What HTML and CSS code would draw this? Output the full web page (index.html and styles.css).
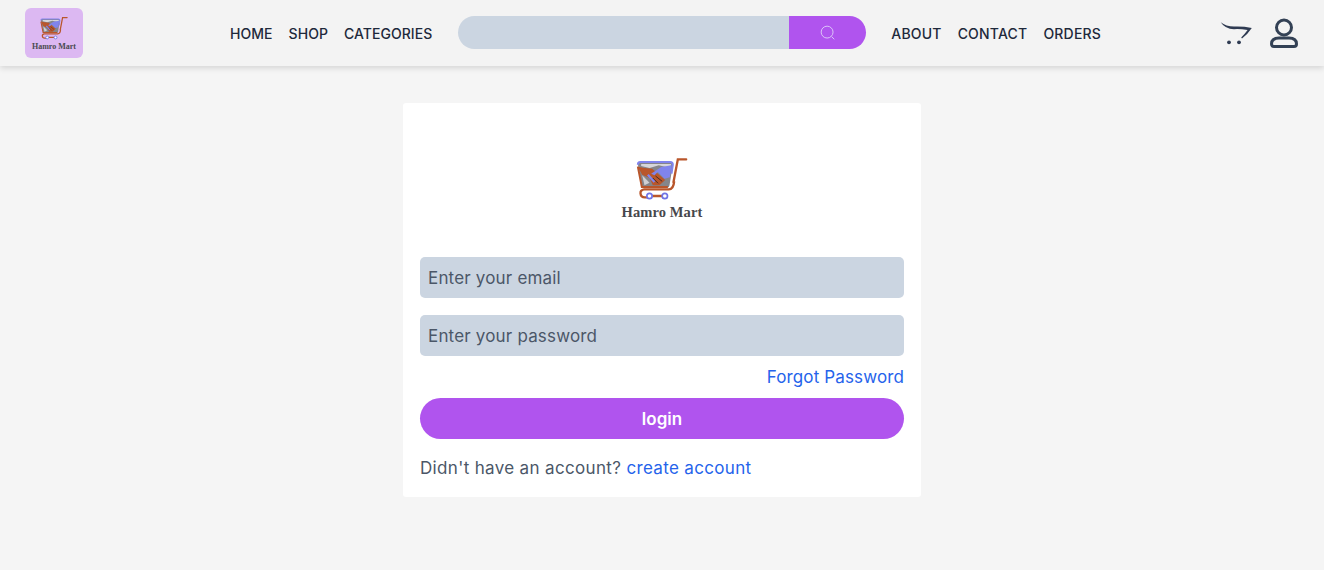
FILE: index.html
```html
<!DOCTYPE html>
<html lang="en">
<head>
    <meta charset="UTF-8">
    <meta name="viewport" content="width=device-width, initial-scale=1.0">
    <link rel="stylesheet" href="styles.css">
    <title>Hamro Mart</title>
</head>
<body>

    <!-- Dibujo del carrito, se usa en los dos logos -->
    <svg class="defs" width="0" height="0">
        <symbol id="cartLogo" viewBox="110 55 155 135">
            <path d="M115 76 Q115 70 122 70 H212 Q220 70 220 78 L210 140 Q209 148 202 148 H136 Q129 148 127 140 Z" fill="#85858a"/>
            <path d="M125 76 H215 L212 88 L178 80 L150 88 L125 82 Z" fill="#d6d6da"/>
            <path d="M128 110 L150 132 L135 140 Z" fill="#d0d0d4"/>
            <path d="M115 84 L135 88 L158 90 L197 124 L180 140 L160 140 L150 118 L128 108 Z" fill="#b9562b"/>
            <path d="M115 84 L127 145 H205" fill="none" stroke="#b9562b" stroke-width="6"/>
            <path d="M155 105 L185 85 L216 80 L211 116 L195 120 L175 100 L165 110 Z" fill="#8084ec"/>
            <path d="M145 108 L165 130" stroke="#8084ec" stroke-width="7"/>
            <path d="M168 112 L188 128 M160 118 L176 134" stroke="#4a2c24" stroke-width="3"/>
            <path d="M115 78 Q115 70 122 70 H212 Q220 70 220 78 L216 105" fill="none" stroke="#8084ec" stroke-width="6"/>
            <path d="M222 130 L235 62 H260" fill="none" stroke="#b9562b" stroke-width="7" stroke-linecap="round"/>
            <path d="M224 128 Q222 152 208 152 H134 Q122 154 123 164 Q124 176 136 176 H150 M158 172 H188" fill="none" stroke="#b9562b" stroke-width="7"/>
            <circle cx="150" cy="172" r="8" fill="#fff" stroke="#7074e6" stroke-width="5"/>
            <circle cx="196" cy="172" r="8" fill="#fff" stroke="#7074e6" stroke-width="5"/>
        </symbol>
    </svg>

    <!-- Barra de navegacion -->
    <header class="navbar">
        <a href="#" class="navLogo">
            <svg class="logoSmall"><use href="#cartLogo"/></svg>
            <span class="brandSmall">Hamro Mart</span>
        </a>

        <nav class="navLinks navLeft">
            <a href="#">HOME</a>
            <a href="#">SHOP</a>
            <a href="#">CATEGORIES</a>
        </nav>

        <form class="searchBox">
            <input type="text" class="searchInput">
            <button type="button" class="searchBtn">
                <svg viewBox="0 0 20 20" width="18" height="18" fill="none" stroke="#dcc4f7" stroke-width="1.1">
                    <circle cx="9" cy="9" r="6.6"/>
                    <path d="M14 14 L17 17"/>
                </svg>
            </button>
        </form>

        <nav class="navLinks navRight">
            <a href="#">ABOUT</a>
            <a href="#">CONTACT</a>
            <a href="#">ORDERS</a>
        </nav>

        <div class="navIcons">
            <svg viewBox="0 0 32 26" width="32" height="26">
                <path d="M0.7 2.3 Q6 6.5 14 6.6 Q23 6.2 31.8 8 Q28 14 22 18.4 L21.2 17.6 Q25 13.6 27.6 10 Q20 8.8 14 9.2 Q5 9 0.7 2.3 Z" fill="#2f3b52"/>
                <circle cx="9" cy="22.3" r="1.9" fill="#2f3b52"/>
                <circle cx="19" cy="22.3" r="1.9" fill="#2f3b52"/>
            </svg>
            <svg viewBox="0 0 28 30" width="28" height="30" fill="none" stroke="#334155" stroke-width="3">
                <circle cx="14" cy="9.5" r="7.5"/>
                <path d="M9 20 H19 Q26.5 20 26.5 26 Q26.5 28.5 24 28.5 H4 Q1.5 28.5 1.5 26 Q1.5 20 9 20 Z"/>
            </svg>
        </div>
    </header>

    <!-- Formulario de acceso -->
    <main class="loginPage">
        <form class="loginCard">
            <div class="cardLogo">
                <svg class="logoBig"><use href="#cartLogo"/></svg>
                <span class="brandBig">Hamro Mart</span>
            </div>

            <input type="email" class="field" placeholder="Enter your email">
            <input type="password" class="field" placeholder="Enter your password">
            <a href="#" class="forgot">Forgot Password</a>
            <button type="button" class="loginBtn">login</button>
            <p class="signup">Didn't have an account? <a href="#">create account</a></p>
        </form>
    </main>

</body>
</html>
```

FILE: styles.css
```css
body {
    margin: 0;
    height: 570px;
    overflow: hidden;
    background-color: #f5f5f5;
    font-family: Inter, "Open Sans", Arial, sans-serif;
    color: #334155;
}

a {
    text-decoration: none;
}

.defs {
    display: block;
}

.navbar {
    display: flex;
    align-items: center;
    height: 66px;
    background-color: #f3f3f3;
    box-shadow: 0 2px 6px rgba(0, 0, 0, 0.14);
}

.navLogo {
    display: flex;
    flex-direction: column;
    align-items: center;
    justify-content: flex-end;
    width: 58px;
    height: 50px;
    padding-bottom: 7px;
    box-sizing: border-box;
    margin-left: 25px;
    margin-top: -1px;
    background-color: #dcb8f2;
    border-radius: 6px;
}

.logoSmall {
    width: 28px;
    height: 25px;
    margin-bottom: 1px;
    filter: blur(0.3px);
}

.brandSmall {
    font-family: "Liberation Serif", serif;
    font-size: 8px;
    font-weight: bold;
    color: #4a4a50;
    line-height: 9px;
}

.navLinks {
    display: flex;
    gap: 16px;
}

.navLinks a {
    font-size: 14px;
    font-weight: 500;
    letter-spacing: 0.05px;
    color: #1e293b;
}

.navLeft {
    margin-left: 147px;
}

.searchBox {
    display: flex;
    width: 408px;
    height: 33px;
    margin-left: 26px;
    margin-top: -1px;
}

.searchInput {
    flex: 1;
    min-width: 0;
    padding: 0;
    border: none;
    background-color: #cbd5e1;
    border-radius: 17px 0 0 17px;
}

.searchBtn {
    display: flex;
    align-items: center;
    justify-content: center;
    width: 77px;
    padding: 0;
    border: none;
    background-color: #b054ee;
    border-radius: 0 17px 17px 0;
}

.navRight {
    margin-left: 25px;
}

.navRight a {
    letter-spacing: 0.2px;
}

.navIcons {
    display: flex;
    align-items: center;
    gap: 18px;
    margin-left: auto;
    margin-right: 26px;
}

.loginPage {
    display: flex;
    justify-content: center;
    padding-top: 37px;
}

.loginCard {
    display: flex;
    flex-direction: column;
    width: 484px;
    height: 394px;
    padding: 0 17px;
    background-color: #fff;
    border-radius: 3px;
}

.cardLogo {
    display: flex;
    flex-direction: column;
    align-items: center;
    height: 100px;
    padding-top: 54px;
}

.logoBig {
    width: 52px;
    height: 45px;
    filter: blur(0.3px);
}

.brandBig {
    font-family: "Liberation Serif", serif;
    font-size: 14.5px;
    font-weight: bold;
    letter-spacing: 0.1px;
    color: #47474c;
    line-height: 20px;
}

.field {
    flex: none;
    height: 41px;
    padding: 0 8px;
    margin-bottom: 17px;
    border: none;
    background-color: #cbd5e1;
    border-radius: 5px;
    font-family: inherit;
    font-size: 17px;
    letter-spacing: 0.18px;
    box-sizing: border-box;
}

.field::placeholder {
    color: #4b5768;
    opacity: 1;
}

.forgot {
    align-self: flex-end;
    margin-top: -8px;
    font-size: 17px;
    letter-spacing: 0.13px;
    line-height: 24px;
    color: #2563eb;
}

.loginBtn {
    flex: none;
    height: 41px;
    margin-top: 9px;
    border: none;
    background-color: #b054ee;
    border-radius: 21px;
    color: #fff;
    font-family: inherit;
    font-size: 17px;
    font-weight: 600;
}

.signup {
    margin: 17px 0 0;
    font-size: 17px;
    letter-spacing: 0.34px;
    line-height: 24px;
    color: #4b5768;
}

.signup a {
    color: #2563eb;
}
```
